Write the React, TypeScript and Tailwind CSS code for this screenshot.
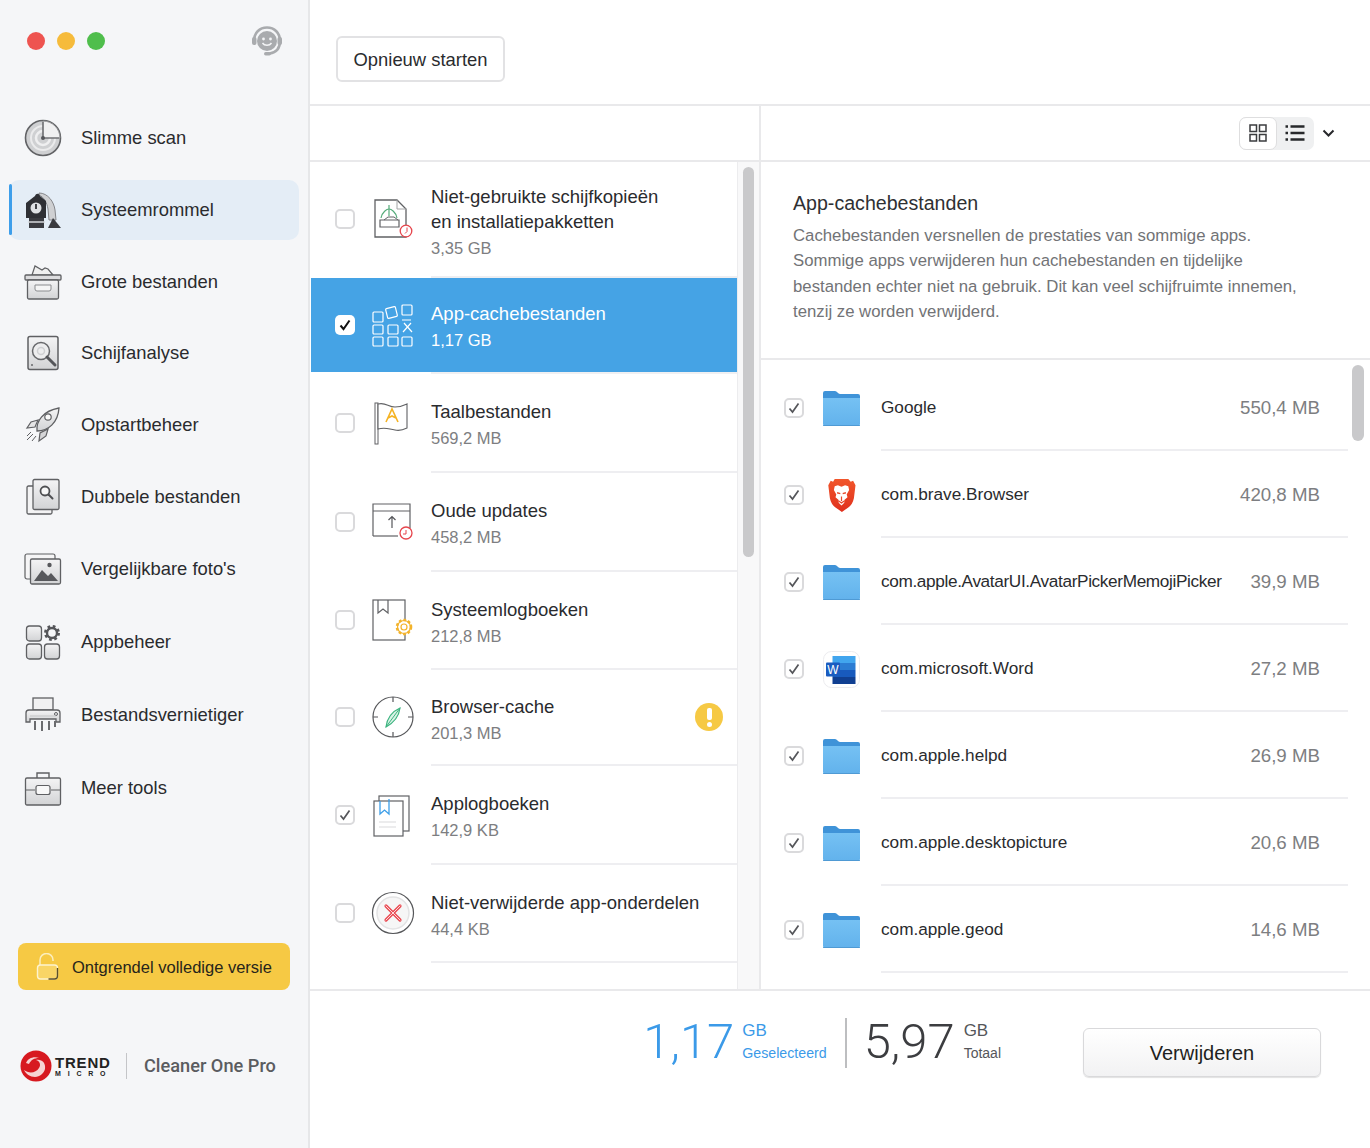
import type { ReactNode } from "react";

const FONT = "font-['Liberation_Sans',Arial,sans-serif]";

function Ico({ size = 38, children }: { size?: number; children: ReactNode }) {
  return (
    <svg width={size} height={size} viewBox={`0 0 ${size} ${size}`} fill="none" className="shrink-0">
      {children}
    </svg>
  );
}

const S = "#5f6063";

const ScanIcon = () => (
  <Ico>
    <circle cx="19" cy="19" r="17.5" fill="#cfd0d2" stroke="#626366" strokeWidth="1.6" />
    <circle cx="19" cy="19" r="12" stroke="#ebebec" strokeWidth="2" />
    <circle cx="19" cy="19" r="7" stroke="#efeff0" strokeWidth="2.5" />
    <path d="M19 2a17 17 0 0 1 17 17H19z" fill="#f0f0f1" stroke="#8c8d90" strokeWidth="1" />
    <path d="M19 3v16h16" stroke="#626366" strokeWidth="1.2" />
    <circle cx="19" cy="19" r="2" fill="#55565a" />
  </Ico>
);

const VacuumIcon = () => (
  <Ico>
    <path d="M15 2c9 0 15 9 16 17l1 10h-7l-1-11c-1-6-4-12-9-14z" fill="#cfd0d2" stroke="#85868a" />
    <path d="M11 5c1-3 4-3 5 0l6 5v17H2V12z" fill="#2f3035" />
    <circle cx="12" cy="17" r="5.5" fill="#dfe1e4" />
    <path d="M12 13v5" stroke="#2f3035" strokeWidth="1.8" />
    <path d="M5 27h15v10H5z" fill="#3a3b40" />
    <path d="M4 31h17" stroke="#d6d8db" strokeWidth="1.5" />
    <path d="M29 27l8 10H24z" fill="#3a3b40" />
  </Ico>
);

const BoxIcon = () => (
  <Ico>
    <path d="M8 12l3-9 7 4 3-2 3 1 5 6z" fill="#efefef" stroke={S} strokeWidth="1.2" />
    <rect x="1" y="12" width="36" height="5" rx="1" fill="#dcdcde" stroke={S} strokeWidth="1.3" />
    <rect x="3.5" y="17" width="31" height="19" rx="1.5" fill="url(#g1)" stroke={S} strokeWidth="1.3" />
    <path d="M11 22h16v4a2 2 0 0 1-2 2H13a2 2 0 0 1-2-2z" fill="#f5f5f5" stroke="#8a8b8e" />
  </Ico>
);

const DiskIcon = () => (
  <Ico>
    <rect x="4" y="2.5" width="30" height="33" rx="2" fill="url(#g1)" stroke={S} strokeWidth="1.5" />
    <circle cx="17" cy="17" r="8.5" fill="#ededee" stroke="#67686b" strokeWidth="1.5" />
    <circle cx="17" cy="17" r="3.5" stroke="#cfd0d2" strokeWidth="1.5" />
    <path d="M23 23l8 8" stroke="#55565a" strokeWidth="3" strokeLinecap="round" />
    <circle cx="8" cy="31" r="1" fill="#67686b" />
  </Ico>
);

const RocketIcon = () => (
  <Ico>
    <path d="M13 25c-1-10 6-20 22-23 -1 15-11 23-22 23z" fill="url(#g1)" stroke={S} strokeWidth="1.3" />
    <path d="M14 14l-7 2-4 6 8-1z" fill="#e5e5e6" stroke={S} strokeWidth="1.2" />
    <path d="M24 23l-2 7-7 5 1-8z" fill="#d5d5d7" stroke={S} strokeWidth="1.2" />
    <circle cx="24" cy="11" r="3.2" fill="#fafafa" stroke={S} strokeWidth="1.2" />
    <path d="M9 28l-6 6M12 30l-4 5M7 26l-4 4" stroke={S} strokeWidth="1" />
  </Ico>
);

const DupIcon = () => (
  <Ico>
    <rect x="3" y="8" width="25" height="28" rx="1.5" fill="#f3f3f4" stroke={S} strokeWidth="1.3" />
    <rect x="9" y="1.5" width="26" height="30" rx="1.5" fill="url(#g1)" stroke={S} strokeWidth="1.3" />
    <circle cx="21" cy="13" r="4.5" fill="#f7f7f7" stroke="#4e4f52" strokeWidth="1.8" />
    <path d="M24.5 16.5l4 4" stroke="#4e4f52" strokeWidth="2" strokeLinecap="round" />
  </Ico>
);

const PhotoIcon = () => (
  <Ico>
    <rect x="1" y="4" width="30" height="25" rx="2" fill="#f5f5f6" stroke={S} strokeWidth="1.2" />
    <rect x="6.5" y="9" width="30" height="25" rx="1.5" fill="url(#g1)" stroke={S} strokeWidth="1.3" />
    <path d="M10 31l8-11 6 6 3-3 7 8z" fill="#57585c" />
    <circle cx="25.5" cy="15" r="2.2" fill="#57585c" />
  </Ico>
);

const AppsIcon = () => (
  <Ico>
    <rect x="2.5" y="3" width="15" height="15" rx="3" fill="url(#g1)" stroke={S} strokeWidth="1.3" />
    <rect x="2.5" y="21" width="15" height="15" rx="3" fill="url(#g1)" stroke={S} strokeWidth="1.3" />
    <rect x="20.5" y="21" width="15" height="15" rx="3" fill="url(#g1)" stroke={S} strokeWidth="1.3" />
    <circle cx="28" cy="10" r="6.5" stroke="#55565a" strokeWidth="3" strokeDasharray="2.6 2.5" />
    <circle cx="28" cy="10" r="5" stroke="#55565a" strokeWidth="2.4" />
  </Ico>
);

const ShredIcon = () => (
  <Ico>
    <rect x="9" y="2" width="20" height="12" fill="#f1f1f2" stroke={S} strokeWidth="1.3" />
    <path d="M2 26v-9a3 3 0 0 1 3-3h28a3 3 0 0 1 3 3v9h-4v-3H6v3z" fill="url(#g1)" stroke={S} strokeWidth="1.3" />
    <circle cx="32" cy="18" r="1.5" stroke={S} />
    <path d="M6 20h26" stroke="#c4c5c7" />
    <path d="M11 25v9M18 25v10M25 25v9M31 25v6" stroke="#6b6c6f" strokeWidth="2" />
  </Ico>
);

const CaseIcon = () => (
  <Ico>
    <path d="M13 9V4h12v5" stroke={S} strokeWidth="1.4" />
    <rect x="1.5" y="9" width="35" height="27" rx="1.5" fill="url(#g1)" stroke={S} strokeWidth="1.3" />
    <path d="M2 21h9M27 21h9" stroke={S} />
    <rect x="12" y="16.5" width="14" height="9" rx="2" fill="#f8f8f8" stroke={S} strokeWidth="1.2" />
  </Ico>
);

const SupportIcon = () => (
  <Ico size={34}>
    <circle cx="17" cy="17" r="10" fill="#a9abae" />
    <circle cx="13.5" cy="15" r="1.4" fill="#f3f4f6" />
    <circle cx="20.5" cy="15" r="1.4" fill="#f3f4f6" />
    <path d="M12.5 19c2 3 7 3 9 0" stroke="#f3f4f6" strokeWidth="1.5" />
    <path d="M4 17C4 9 9.500 3.500 17 3.500S30 9 30 17c0 7-4 11.500-10.500 12.500" stroke="#a9abae" strokeWidth="2.600" />
    <rect x="2" y="13" width="4.500" height="8" rx="2" fill="#a9abae" />
    <rect x="27.500" y="13" width="4.500" height="8" rx="2" fill="#a9abae" />
    <rect x="14" y="28" width="7" height="3.500" rx="1.700" fill="#a9abae" />
  </Ico>
);

const DiskImageIcon = () => (
  <Ico size={44}>
    <path d="M4 3h22l9 9v28H4z" fill="#fff" stroke="#606164" strokeWidth="1.3" />
    <path d="M26 3v9h9" stroke="#a3a4a6" />
    <path d="M10 21c1-6 6-9 8-9s7 3 8 9" stroke="#55ab7a" strokeWidth="1.2" />
    <path d="M18 8v11" stroke="#55ab7a" strokeWidth="1.2" />
    <path d="M9 23h19v7H9z" fill="#fff" stroke="#606164" strokeWidth="1.2" />
    <path d="M13 23l4-3h6l4 3" stroke="#606164" />
    <circle cx="35" cy="34" r="5.800" fill="#fff" stroke="#e6454c" strokeWidth="1.3" />
    <path d="M36 30.500v4l-2 2" stroke="#e6454c" />
  </Ico>
);

const CacheIcon = () => (
  <Ico size={44}>
    <g stroke="#fff" strokeWidth="1.2">
      <rect x="2" y="9" width="10" height="10" rx="1" />
      <rect x="15.500" y="4.500" width="10" height="10" rx="1" transform="rotate(-14 20.500 9.500)" />
      <rect x="31" y="2" width="10" height="10" rx="1" />
      <rect x="2" y="22" width="10" height="9" rx="1" />
      <rect x="17" y="22" width="10" height="9" rx="1" />
      <path d="M31 17h9M32 29l8-9M33 20l8 9" />
      <rect x="2" y="34" width="10" height="9" rx="1" />
      <rect x="17" y="34" width="10" height="9" rx="1" />
      <rect x="31" y="34" width="10" height="9" rx="1" />
    </g>
  </Ico>
);

const FlagIcon = () => (
  <Ico size={44}>
    <rect x="4" y="2" width="3" height="41" fill="#fff" stroke="#606164" strokeWidth="1" />
    <path d="M7 3c8-2 10 3 17 3 4 0 8-1 12-3v24c-4 2-8 3-12 2-7-1-9-3-17-1z" fill="#fff" stroke="#606164" strokeWidth="1.1" />
    <path d="M15 21l6-13 6 13M17 17l4-2 4 2" stroke="#f5b323" strokeWidth="1.600" />
  </Ico>
);

const UpdateIcon = () => (
  <Ico size={44}>
    <path d="M2 34V4h37v26" fill="#fff" />
    <path d="M2 36V4h37v24M2 11h37" stroke="#606164" strokeWidth="1.2" />
    <path d="M2 36h25" stroke="#606164" strokeWidth="1.2" />
    <path d="M21 28V17M17.500 20l3.500-3.500 3.500 3.500" stroke="#55565a" strokeWidth="1.2" />
    <circle cx="35" cy="33" r="6" fill="#fff" stroke="#e6454c" strokeWidth="1.3" />
    <path d="M35 30v4h-3" stroke="#e6454c" />
  </Ico>
);

const SysLogIcon = () => (
  <Ico size={44}>
    <rect x="2" y="2" width="32" height="40" fill="#fff" stroke="#606164" strokeWidth="1.200" />
    <path d="M7 2v13l5-4 5 4V2" stroke="#606164" strokeWidth="1.200" />
    <circle cx="33" cy="29" r="7" fill="#fff" stroke="#f3b32b" strokeWidth="2.600" strokeDasharray="2.600 2" />
    <circle cx="33" cy="29" r="6.500" stroke="#f3b32b" strokeWidth="1.200" />
    <circle cx="33" cy="29" r="3" fill="#fff" stroke="#f3b32b" strokeWidth="1.200" />
  </Ico>
);

const CompassIcon = () => (
  <Ico size={44}>
    <circle cx="22" cy="22" r="20" fill="#fff" stroke="#56575a" strokeWidth="1.200" />
    <path d="M22 2v5M22 37v5M2 22h5M37 22h5" stroke="#56575a" strokeWidth="1.200" />
    <path d="M29 13c-1 8-5 14-14 19 1-8 5-15 14-19z" fill="#d9f3e6" stroke="#3cb37f" strokeWidth="1.200" />
    <path d="M15 32l14-19" stroke="#3cb37f" />
  </Ico>
);

const AppLogIcon = () => (
  <Ico size={44}>
    <rect x="8" y="3" width="30" height="35" fill="#fff" stroke="#606164" strokeWidth="1.200" />
    <rect x="3" y="8" width="29" height="35" fill="#fff" stroke="#606164" strokeWidth="1.200" />
    <path d="M9 8v13l4.500-4 4.500 4V6" stroke="#3c9ee8" strokeWidth="1.300" />
    <path d="M8 29h17M8 34h17" stroke="#e6e6e8" strokeWidth="1.500" />
  </Ico>
);

const RemoveIcon = () => (
  <Ico size={44}>
    <circle cx="22" cy="22" r="20.500" fill="#fff" stroke="#56575a" strokeWidth="1.200" />
    <circle cx="22" cy="22" r="16" fill="#f6f6f6" stroke="#e3e3e4" strokeWidth="1.500" />
    <path d="M15 15l14 14M29 15L15 29" stroke="#ea4d55" strokeWidth="3.200" strokeLinecap="round" />
    <path d="M15 15l14 14M29 15L15 29" stroke="#fff" strokeWidth="0.800" strokeLinecap="round" />
  </Ico>
);

const FolderIcon = () => (
  <svg width="37" height="37" viewBox="0 0 37 37" className="shrink-0">
    <path d="M0 3a2 2 0 0 1 2-2h10c2 0 3 3 5 3h18a2 2 0 0 1 2 2v8H0z" fill="#3f93d8" />
    <path d="M0 8h37v26a2 2 0 0 1-2 2H2a2 2 0 0 1-2-2z" fill="url(#g2)" />
    <rect y="35" width="37" height="1" rx="0.500" fill="#4f9ad4" />
  </svg>
);

const BraveIcon = () => (
  <svg width="37" height="37" viewBox="0 0 37 37" className="shrink-0">
    <g transform="translate(3.700 1) scale(0.800 0.920)">
      <path d="M10 1h17l3 3 3-1 3 5-2 14c-1 5-4 8-7 10l-8 5-8-5c-3-2-6-5-7-10L2 8l3-5 3 1z" fill="url(#g3)" />
      <path d="M10 9l4-1 4.500 1.500L23 8l4 1 1 4-3 5 1 3-4 3v3l-3.500 3-3.500-3v-3l-4-3 1-3-3-5z" fill="#fff" />
      <path d="M13 16l4 1M24 16l-4 1M18.500 20v5M15 25l3.500 2 3.500-2" stroke="#e8482b" strokeWidth="1.500" fill="none" />
    </g>
  </svg>
);

const WordIcon = () => (
  <svg width="37" height="37" viewBox="0 0 37 37" className="shrink-0">
    <rect x="0.500" y="0.500" width="36" height="36" rx="8" fill="#fff" stroke="#ececef" />
    <rect x="9.500" y="5" width="23" height="7" fill="#41a5ee" />
    <rect x="9.500" y="12" width="23" height="7" fill="#2b7cd3" />
    <rect x="9.500" y="19" width="23" height="7" fill="#185abd" />
    <rect x="9.500" y="26" width="23" height="7" fill="#103f91" />
    <rect x="3" y="11.500" width="14" height="14" rx="1" fill="#1a5cc0" />
    <text x="10" y="22.500" textAnchor="middle" fontSize="12" fill="#fff" fontFamily="Liberation Sans">W</text>
  </svg>
);

function Checkbox({ checked, strong }: { checked?: boolean; strong?: boolean }) {
  return (
    <div
      className={`w-5 h-5 shrink-0 rounded-[5px] flex items-center justify-center ${
        strong ? "bg-white" : "bg-white border-2 border-[#dadadc]"
      }`}
    >
      {checked && (
        <svg width="14" height="14" viewBox="0 0 14 14" fill="none">
          <path d="M2.500 7.500l3 3.500 6-8.500" stroke={strong ? "#111" : "#55565a"} strokeWidth={strong ? 2 : 1.700} />
        </svg>
      )}
    </div>
  );
}

const navItems = [
  { label: "Slimme scan", icon: <ScanIcon />, shift: "" },
  { label: "Systeemrommel", icon: <VacuumIcon />, shift: "", active: true },
  { label: "Grote bestanden", icon: <BoxIcon />, shift: "" },
  { label: "Schijfanalyse", icon: <DiskIcon />, shift: "-mt-px" },
  { label: "Opstartbeheer", icon: <RocketIcon />, shift: "" },
  { label: "Dubbele bestanden", icon: <DupIcon />, shift: "" },
  { label: "Vergelijkbare foto's", icon: <PhotoIcon />, shift: "" },
  { label: "Appbeheer", icon: <AppsIcon />, shift: "mt-px" },
  { label: "Bestandsvernietiger", icon: <ShredIcon />, shift: "mt-px" },
  { label: "Meer tools", icon: <CaseIcon />, shift: "mt-px" },
];

const categories = [
  { h: "h-[116px]", title: ["Niet-gebruikte schijfkopieën", "en installatiepakketten"], size: "3,35 GB", icon: <DiskImageIcon /> },
  { h: "h-[96px]", title: ["App-cachebestanden"], size: "1,17 GB", icon: <CacheIcon />, selected: true, checked: true },
  { h: "h-[99px]", title: ["Taalbestanden"], size: "569,2 MB", icon: <FlagIcon /> },
  { h: "h-[99px]", title: ["Oude updates"], size: "458,2 MB", icon: <UpdateIcon /> },
  { h: "h-[98px]", title: ["Systeemlogboeken"], size: "212,8 MB", icon: <SysLogIcon /> },
  { h: "h-[96px]", title: ["Browser-cache"], size: "201,3 MB", icon: <CompassIcon />, warn: true },
  { h: "h-[99px]", title: ["Applogboeken"], size: "142,9 KB", icon: <AppLogIcon />, checked: true },
  { h: "h-[98px]", title: ["Niet-verwijderde app-onderdelen"], size: "44,4 KB", icon: <RemoveIcon /> },
];

const files = [
  { name: "Google", size: "550,4 MB", icon: <FolderIcon />, track: "" },
  { name: "com.brave.Browser", size: "420,8 MB", icon: <BraveIcon />, track: "" },
  { name: "com.apple.AvatarUI.AvatarPickerMemojiPicker", size: "39,9 MB", icon: <FolderIcon />, track: "tracking-[-0.350px]" },
  { name: "com.microsoft.Word", size: "27,2 MB", icon: <WordIcon />, track: "" },
  { name: "com.apple.helpd", size: "26,9 MB", icon: <FolderIcon />, track: "" },
  { name: "com.apple.desktopicture", size: "20,6 MB", icon: <FolderIcon />, track: "" },
  { name: "com.apple.geod", size: "14,6 MB", icon: <FolderIcon />, track: "" },
];

function Sidebar() {
  return (
    <aside className="w-[310px] shrink-0 h-full flex flex-col bg-[#f5f6f8] border-r-2 border-[#e6e7e9]">
      <div className="h-[108px] shrink-0 flex items-start justify-between pl-[27px] pr-[24px] pt-[24px]">
        <div className="flex gap-[12px] pt-[8px]">
          <span className="w-[18px] h-[18px] rounded-full bg-[#ee5450]" />
          <span className="w-[18px] h-[18px] rounded-full bg-[#f6bb3b]" />
          <span className="w-[18px] h-[18px] rounded-full bg-[#4fbe4c]" />
        </div>
        <SupportIcon />
      </div>
      <nav className="flex flex-col gap-[12px] pl-[9px] pr-[9px]">
        {navItems.map((item) => (
          <div
            key={item.label}
            className={`relative h-[60px] flex items-center gap-[19px] pl-[15px] rounded-[10px] text-[18.400px] text-[#2a2b2e] ${item.shift} ${
              item.active ? "bg-[#e4edf6]" : ""
            }`}
          >
            {item.active && <span className="absolute left-0 top-[4px] bottom-[5px] w-[3px] rounded-full bg-[#3d9eea]" />}
            {item.icon}
            <span>{item.label}</span>
          </div>
        ))}
      </nav>
      <div className="mt-auto mx-[18px] h-[47px] rounded-[8px] bg-[#f6c944] flex items-center pl-[18px] gap-[13px] text-[16.500px] text-[#27251b]">
        <svg width="23" height="27" viewBox="0 0 23 27" fill="none">
          <path d="M4 12V7a6.500 6.500 0 0 1 13 0v1" stroke="#fbeebd" strokeWidth="1.500" />
          <rect x="1.500" y="12" width="20" height="14" rx="3" fill="#f9d566" stroke="#fdf3cf" strokeWidth="1.400" />
          <path d="M21.500 15v8a3 3 0 0 1-3 3h-6" stroke="#5b4f2a" strokeWidth="1.400" />
        </svg>
        <span className="pt-px">Ontgrendel volledige versie</span>
      </div>
      <div className="mt-[60px] mb-[66px] ml-[20px] h-[32px] flex items-center">
        <svg width="32" height="32" viewBox="0 0 32 32" className="shrink-0">
          <circle cx="16" cy="16" r="15.500" fill="#d71920" />
          <path d="M4 20c5 4 12 3 15-2 2-3 1-7-3-8 6-1 10 3 9 9-1 4-5 8-10 8-5 0-9-3-11-7z" fill="#f6d3d3" />
          <path d="M6 13c2-5 8-7 13-5-5 0-8 2-10 6z" fill="#f6d3d3" />
        </svg>
        <div className="ml-[3px] w-[54px] flex flex-col leading-none text-[#222] whitespace-nowrap">
          <span className="text-[15px] font-bold tracking-[0.800px]">TREND</span>
          <span className="text-[7px] font-bold tracking-[6.800px]">MICRO</span>
        </div>
        <span className="w-px h-[26px] bg-[#c4c5c8] ml-[17px]" />
        <span className="ml-[17px] text-[18.200px] font-['Roboto',sans-serif] font-medium text-[#5a5c60]">Cleaner One Pro</span>
      </div>
    </aside>
  );
}

function CategoryList() {
  return (
    <div className="w-[451px] shrink-0 h-full flex border-r-2 border-[#e9e9eb] overflow-hidden">
      <div className="flex-1 min-w-0 pl-px">
        {categories.map((c) => (
          <div key={c.title[0]} className={`${c.h} flex flex-col`}>
            <div className={`flex-1 flex items-center pl-[24px] pr-[14px] ${c.selected ? "bg-[#45a3e5]" : ""}`}>
              <Checkbox checked={c.checked} strong={c.selected} />
              <div className="ml-[16px] w-[44px] flex justify-center">{c.icon}</div>
              <div className={`ml-[16px] flex-1 min-w-0 ${c.title.length > 1 ? "pt-[4px]" : c.selected ? "" : "pt-[2px]"}`}>
                {c.title.map((t) => (
                  <div key={t} className={`text-[18.500px] leading-[25px] ${c.selected ? "text-white" : "text-[#2a2b2e]"}`}>
                    {t}
                  </div>
                ))}
                <div className={`text-[16.500px] leading-[20px] mt-[4px] ${c.selected ? "text-white" : "text-[#7d7e81]"}`}>{c.size}</div>
              </div>
              {c.warn && (
                <span className="w-[28px] h-[28px] rounded-full bg-[#f6c944] flex flex-col items-center justify-center gap-[2px]">
                  <span className="w-[5px] h-[12px] rounded-[2px] bg-white" />
                  <span className="w-[5px] h-[5px] rounded-full bg-white" />
                </span>
              )}
            </div>
            <div className={`h-[2px] shrink-0 ml-[120px] ${c.selected ? "bg-[#f0f0f2]" : "bg-[#eeeef1]"}`} />
          </div>
        ))}
      </div>
      <div className="w-[22px] shrink-0 bg-[#f8f8f9] border-l border-[#ececee] pt-[5px] pl-[5px]">
        <div className="w-[11px] h-[390px] rounded-full bg-[#c9c9cb]" />
      </div>
    </div>
  );
}

function DetailPanel() {
  return (
    <div className="flex-1 min-w-0 h-full flex flex-col overflow-hidden">
      <div className="h-[198px] shrink-0 border-b-2 border-[#e9e9eb] pl-[32px] pr-[60px] pt-[28px]">
        <h2 className="text-[19.600px] leading-[26px] text-[#2f3033]">App-cachebestanden</h2>
        <p className="mt-[7px] text-[16.750px] leading-[25.400px] text-[#727376]">
          Cachebestanden versnellen de prestaties van sommige apps.
          <br />
          Sommige apps verwijderen hun cachebestanden en tijdelijke
          <br />
          bestanden echter niet na gebruik. Dit kan veel schijfruimte innemen,
          <br />
          tenzij ze worden verwijderd.
        </p>
      </div>
      <div className="flex-1 min-h-0 flex overflow-hidden">
        <div className="flex-1 min-w-0 pt-[4px]">
          {files.map((f) => (
            <div key={f.name} className="h-[87px] flex flex-col">
              <div className="flex-1 flex items-center pl-[23px] pr-[28px] pt-[3px]">
                <Checkbox checked />
                <div className="ml-[19px] w-[37px] flex justify-center">{f.icon}</div>
                <span className={`ml-[21px] flex-1 min-w-0 text-[17.200px] text-[#2a2b2e] whitespace-nowrap ${f.track}`}>{f.name}</span>
                <span className="text-[18.700px] text-[#7d7e81] whitespace-nowrap">{f.size}</span>
              </div>
              <div className="h-[2px] shrink-0 ml-[120px] bg-[#eeeef1]" />
            </div>
          ))}
        </div>
        <div className="w-[22px] shrink-0 pt-[5px] pl-[4px]">
          <div className="w-[12px] h-[76px] rounded-full bg-[#c9c9cb]" />
        </div>
      </div>
    </div>
  );
}

function BottomBar() {
  return (
    <div className="h-[159px] shrink-0 border-t-2 border-[#e9e9eb] flex items-start justify-end pr-[49px] pt-[27px]">
      <div className="flex items-center h-[46px] font-['Roboto',sans-serif] font-light text-[49px] leading-none text-[#3b9ae8]">1,17</div>
      <div className="ml-[8px] mt-[2px] h-[42px] flex flex-col justify-between text-[#3b9ae8]">
        <span className="text-[17px] leading-[22px]">GB</span>
        <span className="text-[14.200px] leading-[18px]">Geselecteerd</span>
      </div>
      <span className="ml-[18px] w-[2px] h-[50px] bg-[#bdbec0]" />
      <div className="ml-[17px] flex items-center h-[46px] font-['Roboto',sans-serif] font-light text-[49px] leading-none text-[#3c3d40]">5,97</div>
      <div className="ml-[9px] mt-[2px] h-[42px] flex flex-col justify-between text-[#55565a]">
        <span className="text-[17px] leading-[22px]">GB</span>
        <span className="text-[14px] leading-[18px]">Totaal</span>
      </div>
      <button className="ml-[82px] mt-[10px] w-[238px] h-[49px] rounded-[6px] border border-[#d9d9db] bg-gradient-to-b from-white to-[#f2f2f3] shadow-[0_1px_1px_rgba(0,0,0,0.12)] text-[20px] text-[#1e1f21]">
        Verwijderen
      </button>
    </div>
  );
}

export default function App() {
  return (
    <div className={`relative w-[1370px] h-[1148px] flex bg-white overflow-hidden ${FONT}`}>
      <svg className="absolute w-0 h-0">
        <defs>
          <linearGradient id="g1" x1="0" y1="0" x2="0" y2="1">
            <stop offset="0" stopColor="#f4f4f5" />
            <stop offset="1" stopColor="#d2d3d5" />
          </linearGradient>
          <linearGradient id="g2" x1="0" y1="0" x2="0" y2="1">
            <stop offset="0" stopColor="#75c1f3" />
            <stop offset="1" stopColor="#62b2ec" />
          </linearGradient>
          <linearGradient id="g3" x1="0" y1="0" x2="0" y2="1">
            <stop offset="0" stopColor="#f1562b" />
            <stop offset="1" stopColor="#e0301e" />
          </linearGradient>
        </defs>
      </svg>
      <Sidebar />
      <main className="flex-1 min-w-0 h-full flex flex-col">
        <div className="h-[106px] shrink-0 border-b-2 border-[#e9e9eb] pl-[26px] pt-[36px]">
          <button className="w-[169px] h-[46px] pt-px rounded-[6px] border-2 border-[#e2e2e4] bg-white text-[18.400px] text-[#2a2b2e]">
            Opnieuw starten
          </button>
        </div>
        <div className="h-[56px] shrink-0 border-b-2 border-[#e9e9eb] flex">
          <div className="w-[451px] shrink-0 border-r-2 border-[#e9e9eb]" />
          <div className="flex-1 flex items-center justify-end pr-[35px]">
            <div className="flex h-[33px] w-[75px] rounded-[7px] bg-[#eff0f1]">
              <div className="w-[38px] rounded-[7px] border border-[#dededf] bg-white flex items-center justify-center">
                <svg width="18" height="18" viewBox="0 0 18 18" fill="none" stroke="#3b3c3f" strokeWidth="1.500">
                  <rect x="1" y="1" width="6.500" height="6.500" />
                  <rect x="10.500" y="1" width="6.500" height="6.500" />
                  <rect x="1" y="10.500" width="6.500" height="6.500" />
                  <rect x="10.500" y="10.500" width="6.500" height="6.500" />
                </svg>
              </div>
              <div className="flex-1 flex items-center justify-center pr-[2px]">
                <svg width="20" height="18" viewBox="0 0 20 18" stroke="#27282b" strokeWidth="2.400" fill="none">
                  <path d="M5.500 2.500H19.500M5.500 9H19.500M5.500 15.500H19.500" />
                  <path d="M0.500 2.500h2.500M0.500 9h2.500M0.500 15.500h2.500" />
                </svg>
              </div>
            </div>
            <svg className="ml-[8px]" width="13" height="9" viewBox="0 0 13 9" fill="none" stroke="#27282b" strokeWidth="2">
              <path d="M1.500 1.500l5 5 5-5" />
            </svg>
          </div>
        </div>
        <div className="flex-1 min-h-0 flex overflow-hidden">
          <CategoryList />
          <DetailPanel />
        </div>
        <BottomBar />
      </main>
    </div>
  );
}
